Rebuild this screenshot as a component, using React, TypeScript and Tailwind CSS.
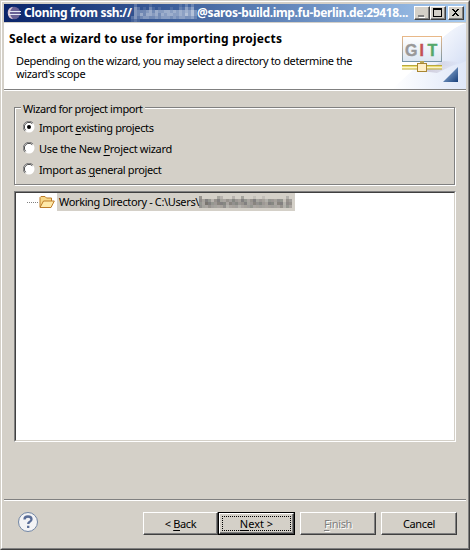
import React from "react";

// Opacity levels (0-9) of the pixelated user name and path.
const TITLE_CELLS = [
  "0200001000000000102020",
  "0420103101000100214240",
  "0433345354455454545463",
  "0435355453545544546463",
  "2423443343444343443342",
  "1210000000000000000000",
];
const TREE_CELLS = [
  "4000003200020030001001000000020",
  "5354245334354354345343244344143",
  "4365445553545445345454355355254",
  "4334333342333233343333333334243",
];
const TREE_TINTS = ["#3c3834", "#4a4348", "#38403c", "#2f3038"];

function Mosaic({ rows, tints }: { rows: string[]; tints: string[] }) {
  return (
    <svg width={rows[0].length * 3} height={rows.length * 3} shapeRendering="crispEdges" className="block shrink-0">
      {rows.flatMap((row, y) =>
        [...row].map((c, x) => (
          <rect key={`${x}-${y}`} x={x * 3} y={y * 3} width={3} height={3} fill={tints[(x * 3 + y) % tints.length]} fillOpacity={Number(c) / 10} />
        )),
      )}
    </svg>
  );
}

function Radio({ on }: { on?: boolean }) {
  return (
    <svg width="12" height="12" viewBox="0 0 12 12" className="-mt-[2px] shrink-0">
      <circle cx="6" cy="6" r="5.5" fill="#fff" />
      <path d="M1.9 10.1A5.5 5.5 0 0 1 10.1 1.9" fill="none" stroke="#808080" />
      <path d="M2.7 9.3A4.6 4.6 0 0 1 9.3 2.7" fill="none" stroke="#404040" />
      {on && <circle cx="6" cy="6" r="2" fill="#000" />}
    </svg>
  );
}

const raised = "border border-t-white border-l-white border-r-[#404040] border-b-[#404040] shadow-[inset_-1px_-1px_0_#808080]";
const underline = "underline underline-offset-2";

export default function App() {
  return (
    <div className="flex h-[550px] w-[470px] flex-col overflow-hidden border border-[#d4d0c8] border-r-[#404040] border-b-[#404040] bg-[#d4d0c8] font-['Noto_Sans',sans-serif] text-[11px] leading-[14px] tracking-[-0.36px] text-black">
      <div className="flex min-h-0 flex-1 flex-col border border-t-white border-l-white border-r-[#808080] border-b-[#808080] p-[2px] pb-0">
        <div className="flex h-[18px] shrink-0 items-center bg-linear-to-r from-[#0a246a] to-[#a6caf0] pl-[3px] pr-[2px] text-[12px] font-bold tracking-[-0.33px] text-white">
          <svg width="15" height="14" viewBox="0 0 15 14" className="shrink-0">
            <circle cx="7" cy="7" r="6.3" fill="#6a6296" />
            <path d="M6 .8A6.3 6.3 0 0 0 6 13.2Q0 7 6 .8" fill="#d8c5d4" />
            <path d="M2.5 5.5H14M1.5 8.5H14" stroke="#e5e9f5" />
          </svg>
          <span className="ml-[2px] w-[107px] shrink-0 whitespace-nowrap">Cloning from ssh://</span>
          <Mosaic rows={TITLE_CELLS} tints={["#fff"]} />
          <span className="shrink-0 whitespace-nowrap">@saros-build.imp.fu-berlin.de:29418...</span>
          <div className="ml-auto flex">
            {["min", "max", "close"].map((k) => (
              <div key={k} className={`h-[14px] w-[16px] shrink-0 bg-[#d4d0c8] ${raised} ${k === "close" ? "ml-[2px]" : ""}`}>
                <svg width="14" height="12" className="block" shapeRendering="crispEdges">
                  {k === "min" && <><path d="M4 10h6v1h-6z" fill="#fff" /><path d="M3 8h6v2h-6z" fill="#808080" /></>}
                  {k === "max" && <path fillRule="evenodd" d="M2 1h9v9h-9zM3 3h7v6h-7z" />}
                  {k === "close" && <path d="M3 2h2v1h1v1h1v-1h1v-1h2v1h-1v1h-1v1h-1v1h1v1h1v1h1v1h-2v-1h-1v-1h-1v1h-1v1h-2v-1h1v-1h1v-1h1v-1h-1v-1h-1v-1h-1z" />}
                </svg>
              </div>
            ))}
          </div>
        </div>
        <div className="mt-px flex h-[67px] shrink-0 justify-between border-b border-[#808080] bg-white">
          <div className="pl-[5px] pt-[9px]">
            <div className="whitespace-nowrap text-[12px] font-bold tracking-[0.2px]">Select a wizard to use for importing projects</div>
            <div className="whitespace-nowrap pl-[7px] pt-[8px]">
              <div className="h-[13px]">Depending on the wizard, you may select a directory to determine the</div>
              <div className="h-[14px]">wizard's scope</div>
            </div>
          </div>
          <svg width="74" height="66" viewBox="0 0 74 66" className="shrink-0">
            <defs>
              <linearGradient id="sky" x1="0" y1="0" x2="1" y2="1"><stop offset="0.2" stopColor="#f6f8fd" /><stop offset="1" stopColor="#d5dff5" /></linearGradient>
              <linearGradient id="low" x1="0" y1="0" x2="1" y2="0"><stop stopColor="#fff" /><stop offset="1" stopColor="#dfe7f8" /></linearGradient>
              <linearGradient id="panel" x2="0" y2="1"><stop stopColor="#fff" /><stop offset="1" stopColor="#dce7f3" /></linearGradient>
              <linearGradient id="edge" x2="0" y2="1"><stop stopColor="#e8b888" /><stop offset="1" stopColor="#7895a8" /></linearGradient>
              <linearGradient id="tri" x2="1" y2="1"><stop stopColor="#a8c5e8" /><stop offset="1" stopColor="#173f7b" /></linearGradient>
              <linearGradient id="shade" x2="1" y2="0"><stop stopColor="#b0a8c0" /><stop offset="1" stopColor="#b0a8c0" stopOpacity="0" /></linearGradient>
            </defs>
            <path d="M74 0Q50 10 40 30L0 66H74Z" fill="url(#low)" />
            <path d="M74 0Q50 8 42 34Q50 50 74 38Z" fill="url(#sky)" />
            <path d="M30 48L52 38L68 39L45 50Z" fill="url(#shade)" opacity=".6" />
            <rect x="10.5" y="13.5" width="39" height="25" fill="url(#panel)" stroke="url(#edge)" />
            <g className="font-['Liberation_Sans',sans-serif] text-[16px] font-bold tracking-normal" strokeWidth=".4">
              <text x="13" y="32.5" fill="#999" stroke="#999">G</text>
              <text x="27.5" y="32.5" fill="#c45053" stroke="#c45053">I</text>
              <text x="35.5" y="32.5" fill="#55a86b" stroke="#55a86b">T</text>
            </g>
            <path d="M10 42.5H50M10 46H50" stroke="#b7a83d" />
            <path d="M10 43.5H50M10 45H50" stroke="#ead75a" />
            <path d="M10 44.3H50" stroke="#fff9d5" />
            <path d="M28 38h4v3h-4z" fill="#b8a656" />
            <rect x="25.5" y="40.5" width="9" height="8" fill="#fff0c8" stroke="#a98632" />
            <path d="M66 44V59H51Z" fill="url(#tri)" />
          </svg>
        </div>
        <div className="flex min-h-0 flex-1 flex-col border-t border-white px-[10px]">
          <fieldset className="mt-[16px] h-[78px] w-[441px] shrink-0 border border-[#808080] shadow-[1px_1px_0_#fff,inset_1px_1px_0_#fff]">
            <div className="-mt-[6px] ml-[6px] w-fit bg-[#d4d0c8] px-[2px] tracking-[-0.42px]">Wizard for project import</div>
            <div className="mt-[5px] flex flex-col gap-[7px] pl-[8px]">
              <div className="flex items-center gap-[4px]"><Radio on /><span>Import <span className={underline}>e</span>xisting projects</span></div>
              <div className="flex items-center gap-[4px]"><Radio /><span className="tracking-[-0.3px]">Use the New <span className={underline}>P</span>roject wizard</span></div>
              <div className="flex items-center gap-[4px]"><Radio /><span>Import as <span className={underline}>g</span>eneral project</span></div>
            </div>
          </fieldset>
          <div className="mt-[6px] h-[251px] w-[442px] shrink-0 border border-t-[#808080] border-l-[#808080] border-r-white border-b-white">
            <div className="h-full border border-t-[#404040] border-l-[#404040] border-r-[#d4d0c8] border-b-[#d4d0c8] bg-white">
              <div className="flex h-[18px] items-center pl-[11px]">
                <div className="w-[11px] border-t border-dotted border-[#808080]" />
                <svg width="16" height="14" viewBox="0 0 16 14" className="ml-px">
                  <path d="M1 12V2.5L2 1.5H6L7.5 3H12.5V6" fill="#f8d98a" stroke="#bd7c29" />
                  <path d="M1 12.5L4.5 6H15.3L12 12.5Z" fill="#ffe9a8" stroke="#bd7c29" />
                </svg>
                <div className="ml-[2px] flex h-[18px] w-[238px] items-center bg-[#d4d0c8] pl-[2px]">
                  <span className="w-[140px] shrink-0 whitespace-nowrap">Working Directory - C:\Users\</span>
                  <Mosaic rows={TREE_CELLS} tints={TREE_TINTS} />
                </div>
              </div>
            </div>
          </div>
        </div>
        <div className="flex h-[49px] shrink-0 items-start border-t border-[#808080] pl-[13px] pt-[12px] shadow-[inset_0_1px_0_#fff]">
          <svg width="22" height="22" viewBox="0 0 22 22" className="-mt-px">
            <circle cx="11" cy="11" r="9.5" fill="#f3f3f5" stroke="#7186a5" />
            <path d="M7.5 8.5Q7.5 5.5 11 5.5Q14.5 5.5 14.5 8.2Q14.5 10 12.5 11Q11.2 11.7 11.2 13M11.2 14.7V17" fill="none" stroke="#596d97" strokeWidth="2.3" />
          </svg>
          <div className={`ml-[104px] flex h-[23px] w-[75px] items-center justify-center ${raised}`}><span>&lt; <span className={underline}>B</span>ack</span></div>
          <div className="h-[23px] w-[77px] border border-black">
            <div className={`h-full p-[2px] ${raised}`}>
              <div className="flex h-full items-center justify-center border border-dotted border-black tracking-normal"><span><span className={underline}>N</span>ext &gt;</span></div>
            </div>
          </div>
          <div className={`ml-[5px] flex h-[23px] w-[76px] items-center justify-center text-[#808080] [text-shadow:1px_1px_0_#fff] ${raised}`}><span><span className={underline}>F</span>inish</span></div>
          <div className={`ml-[5px] flex h-[23px] w-[76px] items-center justify-center ${raised}`}>Cancel</div>
        </div>
      </div>
    </div>
  );
}
